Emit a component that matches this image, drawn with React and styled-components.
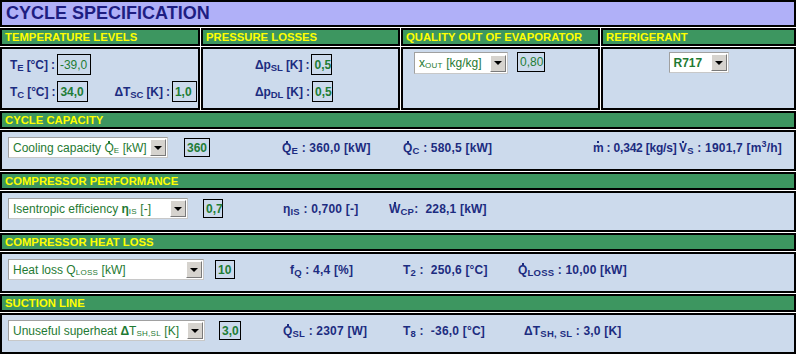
import React from "react";
import styled, { createGlobalStyle } from "styled-components";

const Global = createGlobalStyle`
  *, *::before, *::after { box-sizing: border-box; }
  html, body { margin: 0; padding: 0; background: #fff; }
  body { font-family: "Liberation Sans", Arial, sans-serif; }
`;

const Sheet = styled.div`
  width: 796px;
  display: flex;
  flex-direction: column;
  gap: 1px;
`;

const Title = styled.div`
  height: 27px;
  border: 2px solid #000;
  background: #b0b0f8;
  color: #1e1e82;
  font-size: 18px;
  font-weight: bold;
  line-height: 23px;
  padding-left: 4px;
`;

const TopGrid = styled.div`
  display: grid;
  grid-template-columns: 200px 199px 199px 1fr;
  gap: 1px;
`;

const Header = styled.div`
  height: 18px;
  border: 2px solid #000;
  background: #3d9660;
  color: #ffff00;
  font-size: 11.3px;
  font-weight: bold;
  line-height: 14px;
  padding-left: 3px;
  white-space: nowrap;
  overflow: hidden;
`;

const Body = styled.div`
  height: ${(p) => p.$h}px;
  border: 2px solid #000;
  background: #ccdaec;
`;

const Fields = styled(Body)`
  display: flex;
  flex-direction: column;
  gap: 6px;
  padding: 5px 0 0 ${(p) => p.$left}px;
`;

const Field = styled.div`
  display: flex;
  align-items: center;
  gap: 2px;
`;

const PickBody = styled(Body)`
  display: flex;
  align-items: flex-start;
  justify-content: ${(p) => (p.$center ? "center" : "flex-start")};
  gap: 9px;
  padding: 3px 0 0 ${(p) => p.$left}px;
`;

const RowBody = styled(Body)`
  display: flex;
  align-items: center;
  padding: 0 0 6px 6px;
`;

const Label = styled.span`
  color: #1c2c80;
  font-size: 12px;
  font-weight: bold;
  letter-spacing: -0.1px;
  white-space: nowrap;
  margin-left: ${(p) => p.$ml || 0}px;
`;

const Sub = styled.sub`
  font-size: 9.5px;
  vertical-align: -2px;
  line-height: 0;
`;

const SmallSub = styled.sub`
  font-size: 8px;
  vertical-align: -1px;
  line-height: 0;
  letter-spacing: 0.3px;
`;

const Sup = styled.sup`
  font-size: 9px;
  vertical-align: 5px;
  line-height: 0;
`;

const Dot = styled.span`
  position: relative;
  &::after {
    content: "";
    position: absolute;
    left: 50%;
    top: 0;
    width: 2px;
    height: 2px;
    margin-left: -1px;
    background: currentColor;
  }
`;

const Value = styled.div`
  width: ${(p) => p.$w}px;
  height: ${(p) => p.$h || 21}px;
  flex-shrink: 0;
  border: 1px solid #000;
  color: #1e7d36;
  font-size: 12px;
  font-weight: ${(p) => (p.$light ? "normal" : "bold")};
  display: flex;
  align-items: center;
  padding-left: 2px;
  white-space: nowrap;
`;

const Select = styled.div`
  width: ${(p) => p.$w}px;
  height: ${(p) => p.$h || 21}px;
  flex-shrink: 0;
  background: #fff;
  border: 1px solid #c8c8c8;
  border-top-color: #a0a0a0;
  border-left-color: #a0a0a0;
  display: flex;
  align-items: center;
  justify-content: space-between;
  padding: 0 1px 0 4px;
  color: #1f7a33;
  font-size: 12px;
  font-weight: ${(p) => (p.$bold ? "bold" : "normal")};
  white-space: nowrap;
`;

const Arrow = styled.span`
  width: 16px;
  height: 17px;
  flex-shrink: 0;
  background: #d6d3ce;
  border: 1px solid;
  border-color: #fff #7a7a7a #7a7a7a #fff;
  display: flex;
  align-items: center;
  justify-content: center;
  &::after {
    content: "";
    border-left: 4px solid transparent;
    border-right: 4px solid transparent;
    border-top: 4px solid #000;
  }
`;

const Controls = styled.div`
  width: ${(p) => p.$w}px;
  flex-shrink: 0;
  display: flex;
  align-items: center;
  gap: ${(p) => p.$gap}px;
`;

const Result = styled.div`
  width: ${(p) => (p.$w ? `${p.$w}px` : "auto")};
  flex-shrink: 0;
  color: #1c2c80;
  font-size: 12px;
  font-weight: bold;
  letter-spacing: ${(p) => (p.$tight ? "-0.2px" : "0.2px")};
  white-space: nowrap;
`;

const Greek = styled.span`
  font-weight: bold;
`;

const sections = [
  {
    title: "CYCLE CAPACITY",
    select: { w: 160, text: <>Cooling capacity <Dot>Q</Dot><SmallSub>E</SmallSub> [kW]</> },
    gap: 16,
    value: { w: 26, text: "360" },
    ctrl: 274,
    results: [
      { w: 121, text: <><Dot>Q</Dot><Sub>E</Sub> : 360,0 [kW]</> },
      { w: 190, text: <><Dot>Q</Dot><Sub>C</Sub> : 580,5 [kW]</> },
      { w: 86, tight: true, text: <><Dot>m</Dot> : 0,342 [kg/s]</> },
      { text: <><Dot>V</Dot><Sub>S</Sub> : 1901,7 [m<Sup>3</Sup>/h]</> },
    ],
  },
  {
    title: "COMPRESSOR PERFORMANCE",
    select: { w: 180, text: <>Isentropic efficiency <Greek>η</Greek><SmallSub>IS</SmallSub> [-]</> },
    gap: 15,
    value: { w: 20, text: "0,7" },
    ctrl: 275,
    results: [
      { w: 106, text: <>η<Sub>IS</Sub> : 0,700 [-]</> },
      { text: <><Dot>W</Dot><Sub>CP</Sub>: &nbsp;228,1 [kW]</> },
    ],
  },
  {
    title: "COMPRESSOR HEAT LOSS",
    select: { w: 196, text: <>Heat loss Q<SmallSub>LOSS</SmallSub> [kW]</> },
    gap: 11,
    value: { w: 20, text: "10" },
    ctrl: 282,
    results: [
      { w: 113, text: <>f<Sub>Q</Sub> : 4,4 [%]</> },
      { w: 115, text: <>T<Sub>2</Sub> : &nbsp;250,6 [°C]</> },
      { text: <><Dot>Q</Dot><Sub>LOSS</Sub> : 10,00 [kW]</> },
    ],
  },
  {
    title: "SUCTION LINE",
    select: { w: 197, text: <>Unuseful superheat <Greek>Δ</Greek>T<SmallSub>SH,SL</SmallSub> [K]</> },
    gap: 14,
    value: { w: 22, text: "3,0" },
    ctrl: 275,
    results: [
      { w: 120, text: <><Dot>Q</Dot><Sub>SL</Sub> : 2307 [W]</> },
      { w: 121, text: <>T<Sub>8</Sub> : &nbsp;-36,0 [°C]</> },
      { text: <>ΔT<Sub>SH, SL</Sub> : 3,0 [K]</> },
    ],
  },
];

const Section = ({ s }) => (
  <>
    <Header>{s.title}</Header>
    <RowBody $h={41}>
      <Controls $w={s.ctrl} $gap={s.gap}>
        <Select $w={s.select.w}>
          <span>{s.select.text}</span>
          <Arrow />
        </Select>
        <Value $w={s.value.w} $h={19}>{s.value.text}</Value>
      </Controls>
      {s.results.map((r, i) => (
        <Result key={i} $w={r.w} $tight={r.tight}>{r.text}</Result>
      ))}
    </RowBody>
  </>
);

export default function App() {
  return (
    <>
      <Global />
      <Sheet>
        <Title>CYCLE SPECIFICATION</Title>
        <TopGrid>
          <Header>TEMPERATURE LEVELS</Header>
          <Header>PRESSURE LOSSES</Header>
          <Header>QUALITY OUT OF EVAPORATOR</Header>
          <Header>REFRIGERANT</Header>

          <Fields $h={63} $left={8}>
            <Field>
              <Label>T<Sub>E</Sub> [°C] :</Label>
              <Value $w={34} $light>-39,0</Value>
            </Field>
            <Field>
              <Label>T<Sub>C</Sub> [°C] :</Label>
              <Value $w={31}>34,0</Value>
              <Label $ml={24}>ΔT<Sub>SC</Sub> [K] :</Label>
              <Value $w={25}>1,0</Value>
            </Field>
          </Fields>

          <Fields $h={63} $left={52}>
            <Field>
              <Label>Δp<Sub>SL</Sub> [K] :</Label>
              <Value $w={21}>0,5</Value>
            </Field>
            <Field>
              <Label>Δp<Sub>DL</Sub> [K] :</Label>
              <Value $w={21}>0,5</Value>
            </Field>
          </Fields>

          <PickBody $h={63} $left={11}>
            <Select $w={94} $h={22}>
              <span>x<SmallSub>OUT</SmallSub> [kg/kg]</span>
              <Arrow />
            </Select>
            <Value $w={28} $h={20} $light>0,80</Value>
          </PickBody>

          <PickBody $h={63} $left={0} $center>
            <Select $w={60} $bold>
              <span>R717</span>
              <Arrow />
            </Select>
          </PickBody>
        </TopGrid>
        {sections.map((s) => (
          <Section key={s.title} s={s} />
        ))}
      </Sheet>
    </>
  );
}
